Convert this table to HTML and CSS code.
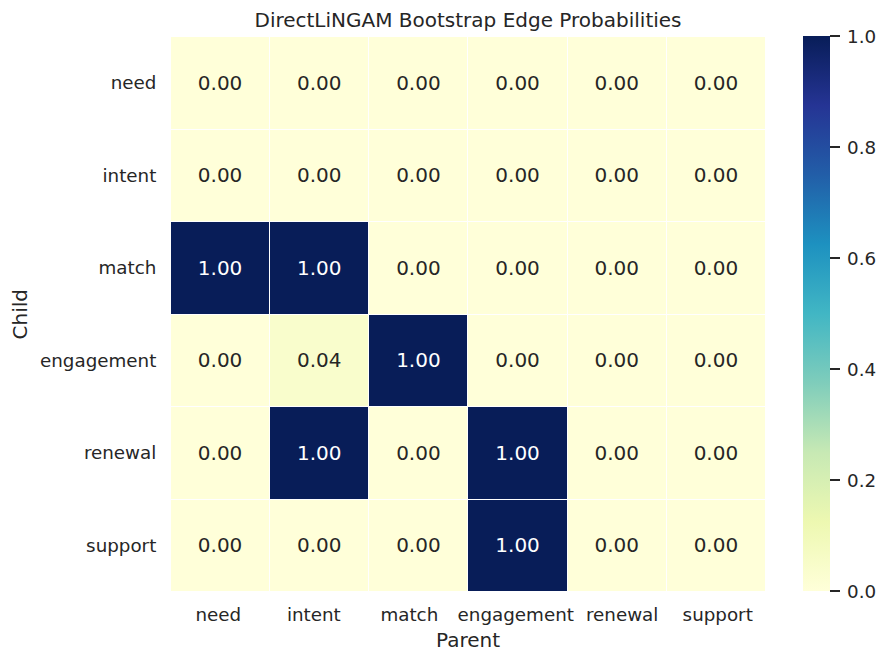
FILE: index.html
```html
<!DOCTYPE html>
<html lang="en">
<head>
<meta charset="utf-8">
<title>DirectLiNGAM Bootstrap Edge Probabilities</title>
<link rel="stylesheet" href="styles.css">
</head>
<body>
<div class="figure">
  <div class="title">DirectLiNGAM Bootstrap Edge Probabilities</div>

  <div class="ylabel"><span>Child</span></div>

  <div class="row-labels">
    <div class="row-label">need</div>
    <div class="row-label">intent</div>
    <div class="row-label">match</div>
    <div class="row-label">engagement</div>
    <div class="row-label">renewal</div>
    <div class="row-label">support</div>
  </div>

  <div class="heatmap">
    <div class="cell c0">0.00</div><div class="cell c0">0.00</div><div class="cell c0">0.00</div><div class="cell c0">0.00</div><div class="cell c0">0.00</div><div class="cell c0">0.00</div>
    <div class="cell c0">0.00</div><div class="cell c0">0.00</div><div class="cell c0">0.00</div><div class="cell c0">0.00</div><div class="cell c0">0.00</div><div class="cell c0">0.00</div>
    <div class="cell c1">1.00</div><div class="cell c1">1.00</div><div class="cell c0">0.00</div><div class="cell c0">0.00</div><div class="cell c0">0.00</div><div class="cell c0">0.00</div>
    <div class="cell c0">0.00</div><div class="cell c004">0.04</div><div class="cell c1">1.00</div><div class="cell c0">0.00</div><div class="cell c0">0.00</div><div class="cell c0">0.00</div>
    <div class="cell c0">0.00</div><div class="cell c1">1.00</div><div class="cell c0">0.00</div><div class="cell c1">1.00</div><div class="cell c0">0.00</div><div class="cell c0">0.00</div>
    <div class="cell c0">0.00</div><div class="cell c0">0.00</div><div class="cell c0">0.00</div><div class="cell c1">1.00</div><div class="cell c0">0.00</div><div class="cell c0">0.00</div>
  </div>

  <div class="colorbar"></div>

  <div class="cbar-ticks">
    <div class="tick"><span class="tick-line"></span><span class="tick-label">1.0</span></div>
    <div class="tick"><span class="tick-line"></span><span class="tick-label">0.8</span></div>
    <div class="tick"><span class="tick-line"></span><span class="tick-label">0.6</span></div>
    <div class="tick"><span class="tick-line"></span><span class="tick-label">0.4</span></div>
    <div class="tick"><span class="tick-line"></span><span class="tick-label">0.2</span></div>
    <div class="tick"><span class="tick-line"></span><span class="tick-label">0.0</span></div>
  </div>

  <div class="xaxis">
    <div class="col-labels">
      <div class="col-label">need</div>
      <div class="col-label">intent</div>
      <div class="col-label">match</div>
      <div class="col-label">engagement</div>
      <div class="col-label">renewal</div>
      <div class="col-label">support</div>
    </div>
    <div class="xlabel">Parent</div>
  </div>
</div>
</body>
</html>
```

FILE: styles.css
```css
html, body {
  margin: 0;
  padding: 0;
  background: #ffffff;
}

body {
  width: 887px;
  height: 662px;
  overflow: hidden;
  font-family: "DejaVu Sans", "Liberation Sans", sans-serif;
  color: #262626;
}

.figure {
  display: grid;
  grid-template-columns: 40px 114px 17px 594px 38px 27px 57px;
  grid-template-rows: 37px 554px 71px;
}

.title {
  grid-column: 4;
  grid-row: 1;
  font-size: 20px;
  line-height: 24px;
  padding-top: 8px;
  text-align: center;
  white-space: nowrap;
}

.ylabel {
  grid-column: 1;
  grid-row: 2;
  display: flex;
  align-items: center;
  justify-content: center;
  font-size: 20px;
}

.ylabel span {
  writing-mode: vertical-rl;
  transform: rotate(180deg);
  line-height: 24px;
}

.row-labels {
  grid-column: 2;
  grid-row: 2;
  display: grid;
  grid-template-rows: repeat(6, 1fr);
  row-gap: 1px;
}

.row-label {
  display: flex;
  align-items: center;
  justify-content: flex-end;
  padding-right: 4px;
  font-size: 18.3px;
  white-space: nowrap;
}

.heatmap {
  grid-column: 4;
  grid-row: 2;
  display: grid;
  grid-template-columns: repeat(6, 1fr);
  grid-template-rows: repeat(6, 1fr);
  gap: 1px;
  background: #ffffff;
}

.cell {
  display: flex;
  align-items: center;
  justify-content: center;
  font-size: 20px;
}

.c0 {
  background: #ffffd9;
  color: #262626;
}

.c004 {
  background: #f9fdcc;
  color: #262626;
}

.c1 {
  background: #081d58;
  color: #ffffff;
}

.colorbar {
  grid-column: 6;
  grid-row: 2;
  margin-top: -1px;
  background: linear-gradient(to top,
    #ffffd9 0%, #edf8b1 12.5%, #c7e9b4 25%, #7fcdbb 37.5%,
    #41b6c4 50%, #1d91c0 62.5%, #225ea8 75%, #253494 87.5%, #081d58 100%);
}

.cbar-ticks {
  grid-column: 7;
  grid-row: 2;
  margin-top: -1px;
  display: flex;
  flex-direction: column;
  justify-content: space-between;
}

.tick {
  height: 0;
  display: flex;
  align-items: center;
}

.tick-line {
  width: 10px;
  height: 1.4px;
  background: #262626;
  flex: none;
}

.tick-label {
  margin-left: 7px;
  font-size: 18.3px;
  white-space: nowrap;
}

.xaxis {
  grid-column: 4;
  grid-row: 3;
  display: flex;
  flex-direction: column;
  align-items: stretch;
}

.col-labels {
  display: grid;
  grid-template-columns: repeat(6, 1fr);
  column-gap: 1px;
  padding-top: 13px;
}

.col-label {
  display: flex;
  justify-content: center;
  font-size: 18.3px;
  line-height: 22px;
  white-space: nowrap;
}

.xlabel {
  margin-top: 2px;
  font-size: 20px;
  line-height: 24px;
  text-align: center;
}
```
